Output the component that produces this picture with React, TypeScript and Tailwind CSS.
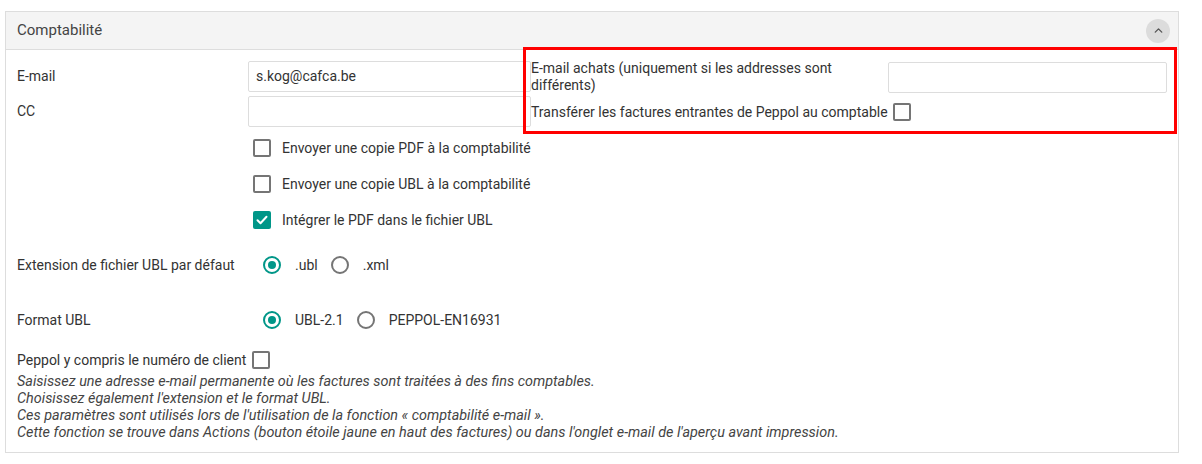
import { ChevronUp } from "lucide-react";

function Checkbox({ checked = false }: { checked?: boolean }) {
  if (checked) {
    return (
      <span className="flex h-[18px] w-[18px] shrink-0 items-center justify-center rounded-[2px] bg-[#009688]">
        <svg width="12" height="10" viewBox="0 0 12 10" fill="none">
          <path d="M1.5 5.2 4.5 8.2 10.5 1.8" stroke="white" strokeWidth="2" strokeLinecap="round" strokeLinejoin="round" />
        </svg>
      </span>
    );
  }
  return <span className="block h-[18px] w-[18px] shrink-0 rounded-[2px] border-2 border-[#757575] bg-white" />;
}

function Radio({ checked = false }: { checked?: boolean }) {
  return (
    <span
      className={`flex h-[18px] w-[18px] shrink-0 items-center justify-center rounded-full border-2 ${
        checked ? "border-[#009688]" : "border-[#757575]"
      }`}
    >
      {checked && <span className="block h-[8px] w-[8px] rounded-full bg-[#009688]" />}
    </span>
  );
}

function RadioOption({ label, checked }: { label: string; checked?: boolean }) {
  return (
    <div className="flex items-center">
      <Radio checked={checked} />
      <span className="ml-[14px] mr-[13px]">{label}</span>
    </div>
  );
}

export default function App() {
  return (
    <div className="min-h-screen bg-white pt-[11px] pl-[5px] text-[14px] text-[#333] font-['Roboto','Liberation_Sans',sans-serif]">
      <div className="w-[1174px] border border-[#dddddd] bg-white">
        {/* Header */}
        <div className="flex h-[38px] items-center justify-between border-b border-[#dddddd] bg-[#f4f4f4] pl-[11px] pr-[8px]">
          <span className="text-[15px] text-[#444]">Comptabilité</span>
          <button className="flex h-[24px] w-[24px] items-center justify-center rounded-full bg-[#dcdcdc] text-[#555]">
            <ChevronUp size={13} strokeWidth={2.5} />
          </button>
        </div>

        {/* Body */}
        <div className="px-[11px] pb-[11px]">
          {/* Emails */}
          <div className="relative flex pt-[11px]">
            <div className="flex w-[514px] flex-col gap-[4px]">
              <div className="flex h-[31px] items-center">
                <span className="w-[231px]">E-mail</span>
                <div className="flex h-[31px] flex-1 items-center rounded-[2px] border border-[#dddddd] px-[7px]">
                  s.kog@cafca.be
                </div>
              </div>
              <div className="flex h-[31px] items-center">
                <span className="w-[231px]">CC</span>
                <div className="h-[31px] flex-1 rounded-[2px] border border-[#dddddd]" />
              </div>
            </div>

            <div className="flex flex-1 flex-col">
              <div className="flex items-start">
                <span className="w-[357px] leading-[17px] -mt-[1px]">
                  E-mail achats (uniquement si les addresses sont différents)
                </span>
                <div className="mt-[1px] h-[31px] flex-1 rounded-[2px] border border-[#dddddd]" />
              </div>
              <div className="mt-[9px] flex h-[18px] items-center gap-[5px]">
                <span>Transférer les factures entrantes de Peppol au comptable</span>
                <Checkbox />
              </div>
            </div>

            {/* annotation frame */}
            <div className="pointer-events-none absolute left-[506px] top-[-3px] h-[87px] w-[654px] border-[3px] border-[#ff0000]" />
          </div>

          {/* Options */}
          <div className="mt-[3px] pl-[236px]">
            <div className="flex h-[36px] items-center gap-[11px]">
              <Checkbox />
              <span>Envoyer une copie PDF à la comptabilité</span>
            </div>
            <div className="flex h-[36px] items-center gap-[11px]">
              <Checkbox />
              <span>Envoyer une copie UBL à la comptabilité</span>
            </div>
            <div className="flex h-[36px] items-center gap-[11px]">
              <Checkbox checked />
              <span>Intégrer le PDF dans le fichier UBL</span>
            </div>
          </div>

          <div className="mt-[9px] flex h-[36px] items-center">
            <span className="w-[246px]">Extension de fichier UBL par défaut</span>
            <RadioOption label=".ubl" checked />
            <RadioOption label=".xml" />
          </div>

          <div className="mt-[19px] flex h-[36px] items-center">
            <span className="w-[246px]">Format UBL</span>
            <RadioOption label="UBL-2.1" checked />
            <RadioOption label="PEPPOL-EN16931" />
          </div>

          <div className="mt-[12px] flex h-[20px] items-center gap-[6px]">
            <span>Peppol y compris le numéro de client</span>
            <Checkbox />
          </div>

          <div className="mt-[3px] text-[14.4px] italic leading-[17px] text-[#444]">
            <p>Saisissez une adresse e-mail permanente où les factures sont traitées à des fins comptables.</p>
            <p>Choisissez également l'extension et le format UBL.</p>
            <p>Ces paramètres sont utilisés lors de l'utilisation de la fonction « comptabilité e-mail ».</p>
            <p>Cette fonction se trouve dans Actions (bouton étoile jaune en haut des factures) ou dans l'onglet e-mail de l'aperçu avant impression.</p>
          </div>
        </div>
      </div>
    </div>
  );
}
